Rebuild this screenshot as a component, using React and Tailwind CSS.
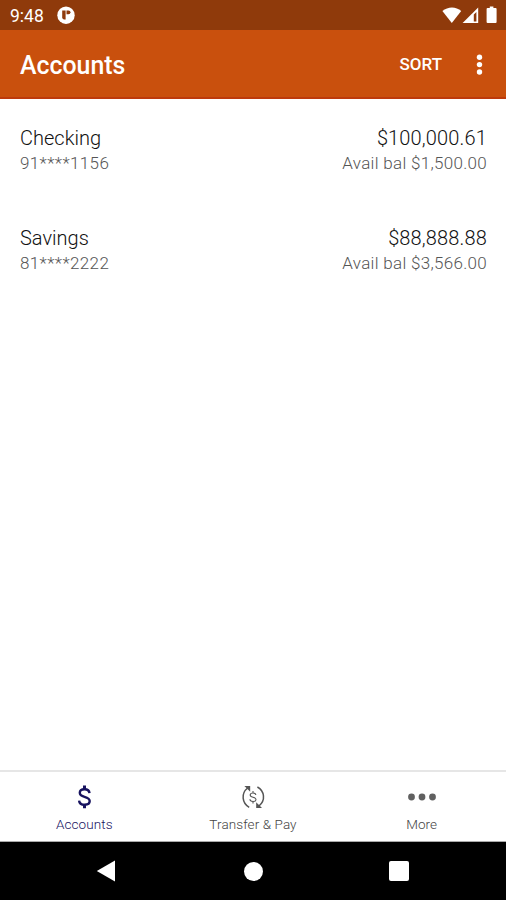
const accounts = [
  { name: 'Checking', number: '91****1156', balance: '$100,000.61', available: '$1,500.00' },
  { name: 'Savings', number: '81****2222', balance: '$88,888.88', available: '$3,566.00' },
]

function StatusBar() {
  return (
    <div className="flex h-[30px] shrink-0 items-center bg-[#8f3a0b] pl-[10px] pr-2 text-white">
      <span className="pt-[3px] text-[17.5px] leading-none">9:48</span>
      <svg className="ml-[13px]" width="18" height="18" viewBox="0 0 18 18">
        <circle cx="9" cy="9.2" r="8.7" fill="#fff" />
        <path d="M5.2 4.4h3.4v9.2H7A6 6 0 0 1 5.2 12z" fill="#8f3a0b" />
        <path d="M9.5 4.4h2a1.9 1.9 0 0 1 0 3.9h-2z" fill="#8f3a0b" />
      </svg>
      <div className="ml-auto flex items-center">
        <svg width="20" height="17" viewBox="0 0 20 17" fill="#fff">
          <path d="M0.4 4C6-0.7 14-0.7 19.2 4L9.8 16z" />
        </svg>
        <svg width="17" height="17" viewBox="0 0 17 17">
          <path d="M16.2 0.6V16H0.6z" fill="#fff" />
          <path d="M11.8 7.6L14.4 5v9.4h-2.6z" fill="#8f3a0b" />
        </svg>
        <svg className="ml-[7px]" width="12" height="18" viewBox="0 0 12 18" fill="#fff">
          <path d="M3.8 0.5h3.6V2h2.2a1 1 0 0 1 1 1v13a1 1 0 0 1-1 1h-8a1 1 0 0 1-1-1V3a1 1 0 0 1 1-1h2.2z" />
        </svg>
      </div>
    </div>
  )
}

function Header() {
  return (
    <header className="flex h-[69px] shrink-0 items-center border-b-2 border-[#bd3a0c] bg-[#c9500d] pl-5 pr-[23px] text-white">
      <h1 className="pt-[5px] text-[24.9px] font-medium">Accounts</h1>
      <span className="ml-auto pt-[3px] text-[17px] font-medium">SORT</span>
      <svg className="ml-[34px] mt-[2px]" width="7" height="22" viewBox="0 0 7 22" fill="#fff">
        <circle cx="3.5" cy="3.2" r="2.7" />
        <circle cx="3.5" cy="10.6" r="2.7" />
        <circle cx="3.5" cy="18" r="2.7" />
      </svg>
    </header>
  )
}

function AccountRow({ account }) {
  return (
    <li className="flex h-[100px] justify-between pl-5 pr-[19px] pt-[27px] font-light">
      <div>
        <p className="text-[20px] leading-[25px] text-[#111]">{account.name}</p>
        <p className="text-[17px] leading-[25px] tracking-[0.38px] text-[#555]">{account.number}</p>
      </div>
      <div className="text-right">
        <p className="text-[20px] leading-[25px] tracking-[0.15px] text-[#111]">{account.balance}</p>
        <p className="text-[17px] leading-[25px] tracking-[0.3px] text-[#555]">Avail bal {account.available}</p>
      </div>
    </li>
  )
}

function DollarIcon() {
  return (
    <svg width="28" height="28" viewBox="0 0 28 28" fill="none" stroke="#17135f" strokeWidth="2.4">
      <path d="M14.5 2.6v4M14.5 21v4.2" strokeWidth="3" />
      <path d="M19.5 10.2C19.3 7.8 17.4 6.2 14.5 6.2c-2.8 0-4.7 1.4-4.7 3.6 0 2.4 1.8 3.3 4.7 4.1 3.2.9 5.2 1.8 5.2 4.2 0 2.3-2 3.7-5 3.7-3.2 0-5.4-1.5-5.6-4.2" />
    </svg>
  )
}

function TransferIcon() {
  return (
    <svg width="28" height="28" viewBox="0 0 28 28" fill="none" stroke="#555" strokeWidth="1.5">
      <path d="M10.2 24.4C3 20 1.8 10.5 8.6 5" />
      <path d="M18.4 4C25.6 8 26.8 17.5 20 23" />
      <path d="M5.4 3h5.8v5.8z" fill="#555" stroke="none" />
      <path d="M23 25h-5.8v-5.8z" fill="#555" stroke="none" />
      <path d="M14 8v2M14 18.4v2M16.9 12c-.2-1.3-1.2-2-2.9-2s-2.8.8-2.8 2c0 1.3 1 1.8 2.8 2.2 1.9.4 3 1 3 2.2 0 1.3-1.2 2.1-3 2.1s-3-.8-3.1-2.2" strokeWidth="1.1" />
    </svg>
  )
}

function MoreIcon() {
  return (
    <svg width="28" height="28" viewBox="0 0 28 28" fill="#606060">
      <circle cx="3.5" cy="14" r="3.4" />
      <circle cx="14" cy="14" r="3.4" />
      <circle cx="24.5" cy="14" r="3.4" />
    </svg>
  )
}

function Tab({ icon, label, active }) {
  return (
    <div className={active ? 'flex flex-col items-center text-[#17135f]' : 'flex flex-col items-center text-[#444]'}>
      {icon}
      <span className="mt-[4px] text-[13.5px] leading-[18px] font-light tracking-[0.1px]">{label}</span>
    </div>
  )
}

export default function App() {
  return (
    <div className="flex h-screen flex-col bg-white font-['Roboto',sans-serif]">
      <StatusBar />
      <Header />
      <ul className="flex-1">
        {accounts.map(a => <AccountRow key={a.name} account={a} />)}
      </ul>
      <nav className="grid h-[72px] shrink-0 grid-cols-3 border-t-2 border-b border-t-[#e6e6e6] border-b-[#aaa] pt-[11px]">
        <Tab icon={<DollarIcon />} label="Accounts" active />
        <Tab icon={<TransferIcon />} label="Transfer & Pay" />
        <Tab icon={<MoreIcon />} label="More" />
      </nav>
      <div className="flex h-[58px] shrink-0 items-center justify-between bg-black pl-[96px] pr-[97px]">
        <svg width="20" height="22" viewBox="0 0 20 22" fill="#fff">
          <path d="M0.8 11L19 0.4v21.2z" />
        </svg>
        <div className="ml-px h-[19px] w-[19px] rounded-full bg-white" />
        <div className="h-5 w-5 rounded-[2px] bg-white" />
      </div>
    </div>
  )
}
